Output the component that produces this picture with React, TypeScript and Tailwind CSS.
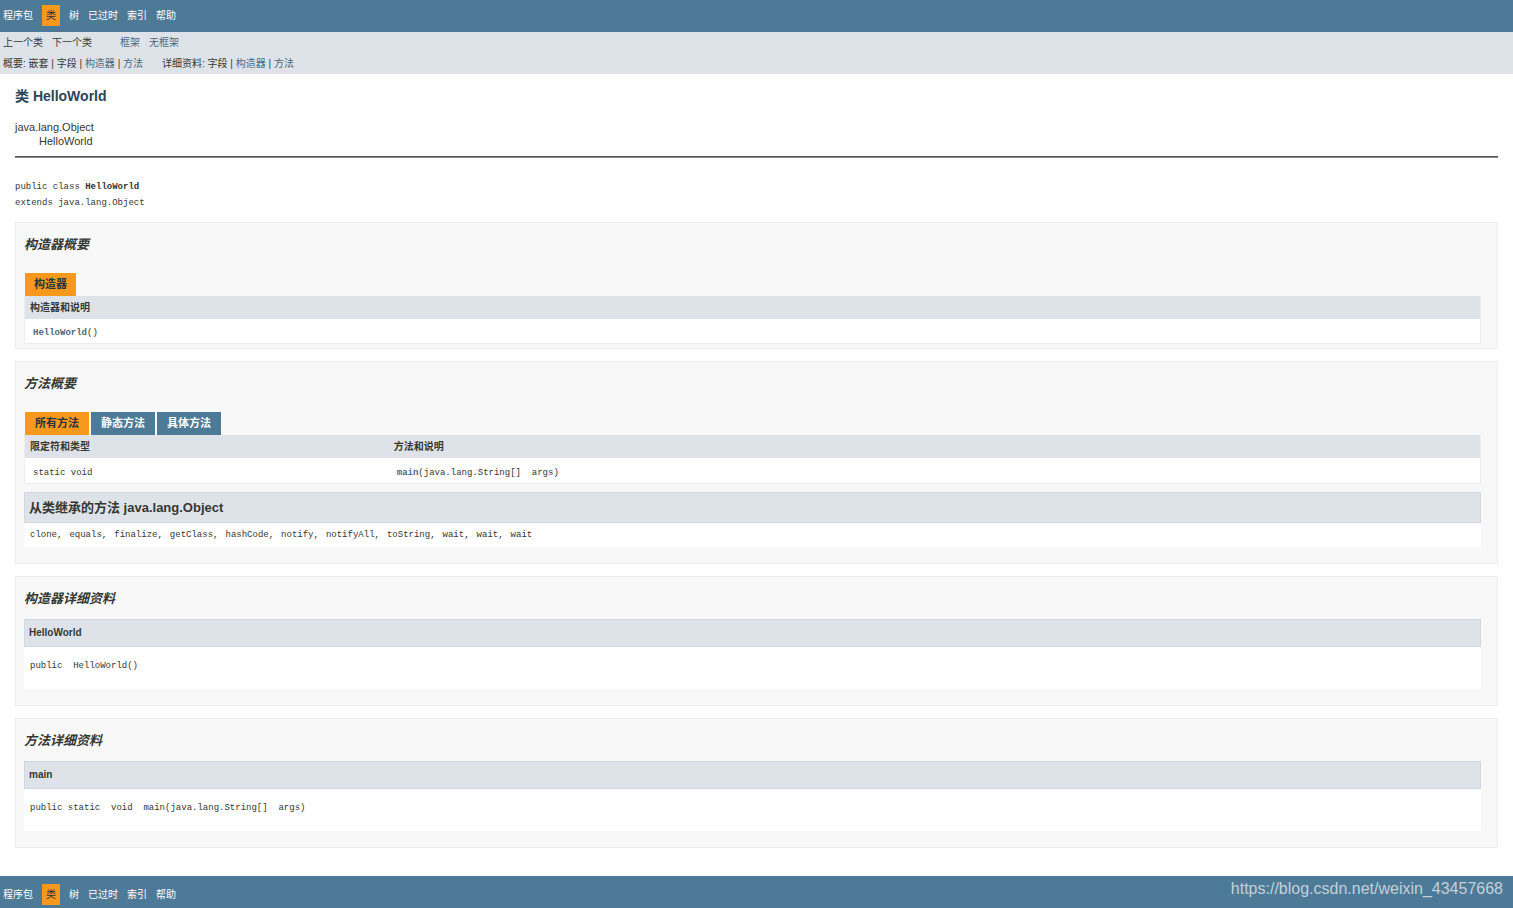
import { useState } from 'react'
import type { ReactNode } from 'react'

const NAV = ['程序包', '类', '树', '已过时', '索引', '帮助']

const INHERITED = [
  'clone', 'equals', 'finalize', 'getClass', 'hashCode', 'notify',
  'notifyAll', 'toString', 'wait', 'wait', 'wait',
]

const METHOD_TABS = ['所有方法', '静态方法', '具体方法']

const MONO = "font-['Liberation_Mono','Noto_Sans_CJK_SC',monospace] text-[9px]"

function NavList() {
  return (
    <ul className="flex gap-[9px] pl-[3px] text-[10px] leading-[21px] text-white">
      {NAV.map(item => (
        <li key={item} className={item === '类' ? 'bg-[#f8981d] px-1 text-[#253441]' : ''}>
          {item === '类' || item === '树' ? item : <a href="#">{item}</a>}
        </li>
      ))}
    </ul>
  )
}

function DocLink({ children }: { children: ReactNode }) {
  return <a href="#" className="text-[#4a6782]">{children}</a>
}

function Section({ title, className = '', children }: { title: string; className?: string; children: ReactNode }) {
  return (
    <section className={`border border-[#ededed] bg-[#f8f8f8] pl-2 pr-4 ${className}`}>
      <h3 className="flex h-[42px] items-center pt-0.5 text-[13px] font-bold italic">{title}</h3>
      {children}
    </section>
  )
}

function DetailBlock({ name, children }: { name: string; children: ReactNode }) {
  return (
    <div className="bg-white">
      <h4 className="border border-[#d0d9e0] bg-[#dee3e9] px-1 text-[10px] font-bold leading-[26px]">{name}</h4>
      <pre className={`${MONO} h-[42px] pl-1.5 pt-[11px] leading-4`}>{children}</pre>
    </div>
  )
}

export default function App() {
  const [tab, setTab] = useState('所有方法')

  return (
    <div className="bg-white font-['Liberation_Sans','Noto_Sans_CJK_SC',sans-serif] text-[#353833]">
      <nav className="h-8 bg-[#4d7a97] pt-[5px]">
        <NavList />
      </nav>

      <div className="bg-[#dee3e9] pl-[3px] text-[10px] leading-[21px]">
        <div className="flex gap-7">
          <div className="flex gap-[9px]">
            <span>上一个类</span>
            <span>下一个类</span>
          </div>
          <div className="flex gap-[9px]">
            <DocLink>框架</DocLink>
            <DocLink>无框架</DocLink>
          </div>
        </div>
        <div className="flex gap-[19px]">
          <p>概要: 嵌套 | 字段 | <DocLink>构造器</DocLink> | <DocLink>方法</DocLink></p>
          <p>详细资料: 字段 | <DocLink>构造器</DocLink> | <DocLink>方法</DocLink></p>
        </div>
      </div>

      <main className="px-[15px] pb-7">
        <h2 className="pt-3 text-sm font-bold text-[#2c4557]">类 HelloWorld</h2>

        <ul className="mt-3.5 text-[11px] leading-[14px]">
          <li>java.lang.Object</li>
          <li className="pl-6">HelloWorld</li>
        </ul>

        <hr className="mt-2 border-t border-b border-t-[#555] border-b-[#888]" />

        <pre className={`${MONO} mt-[21px] leading-4`}>
          public class <b>HelloWorld</b>{'\n'}extends java.lang.Object
        </pre>

        <Section title="构造器概要" className="mt-[11px] pb-1">
          <div className="mt-2 flex pl-px">
            <span className="bg-[#f8981d] px-[9px] text-[11px] font-bold leading-[23px] text-[#253441]">构造器</span>
          </div>
          <div className="border-x border-b border-[#eee] bg-white">
            <table className="w-full text-left">
              <thead>
                <tr className="h-[23px] bg-[#dee3e9] text-[10px]">
                  <th className="px-[5px]">构造器和说明</th>
                </tr>
              </thead>
              <tbody>
                <tr className="h-6">
                  <td className={`${MONO} px-2 pt-1 leading-4`}>
                    <a href="#" className="font-bold text-[#4a6782]">HelloWorld</a>()
                  </td>
                </tr>
              </tbody>
            </table>
          </div>
        </Section>

        <Section title="方法概要" className="mt-3 pb-4">
          <div className="mt-2 flex gap-0.5 pl-px">
            {METHOD_TABS.map(name => (
              <button
                key={name}
                type="button"
                onClick={() => setTab(name)}
                className={`px-[10px] text-[11px] font-bold leading-[23px] ${
                  tab === name ? 'bg-[#f8981d] text-[#253441]' : 'bg-[#4d7a97] text-white'
                }`}
              >
                {name}
              </button>
            ))}
          </div>
          <div className="border-x border-b border-[#eee] bg-white">
            <table className="w-full table-fixed text-left">
              <thead>
                <tr className="h-[23px] bg-[#dee3e9] text-[10px]">
                  <th className="w-1/4 px-[5px]">限定符和类型</th>
                  <th className="px-[5px]">方法和说明</th>
                </tr>
              </thead>
              <tbody>
                <tr className="h-[25px]">
                  <td className={`${MONO} px-2 pt-1 leading-4`}>static void</td>
                  <td className={`${MONO} whitespace-pre px-2 pt-1 leading-4`}>
                    <a href="#" className="font-bold text-[#4a6782]">main</a>{'(java.lang.String[]  args)'}
                  </td>
                </tr>
              </tbody>
            </table>
          </div>

          <div className="mt-2 bg-white">
            <h3 className="border border-[#d0d9e0] bg-[#dee3e9] px-1 text-[13px] font-bold leading-[29px]">
              从类继承的方法 java.lang.Object
            </h3>
            <p className={`${MONO} flex flex-wrap gap-x-[7px] pl-1.5 leading-6`}>
              {INHERITED.map((name, i) => (
                <span key={i}>{name}{i < INHERITED.length - 1 && ','}</span>
              ))}
            </p>
          </div>
        </Section>

        <Section title="构造器详细资料" className="mt-3 pb-4">
          <DetailBlock name="HelloWorld">{'public  HelloWorld()'}</DetailBlock>
        </Section>

        <Section title="方法详细资料" className="mt-3 pb-4">
          <DetailBlock name="main">{'public static  void  main(java.lang.String[]  args)'}</DetailBlock>
        </Section>
      </main>

      <footer className="flex h-8 items-start justify-between bg-[#4d7a97] pr-[10px]">
        <nav className="pt-2">
          <NavList />
        </nav>
        <span className="text-base leading-[26px] text-[#c3d0da]">https://blog.csdn.net/weixin_43457668</span>
      </footer>
    </div>
  )
}
